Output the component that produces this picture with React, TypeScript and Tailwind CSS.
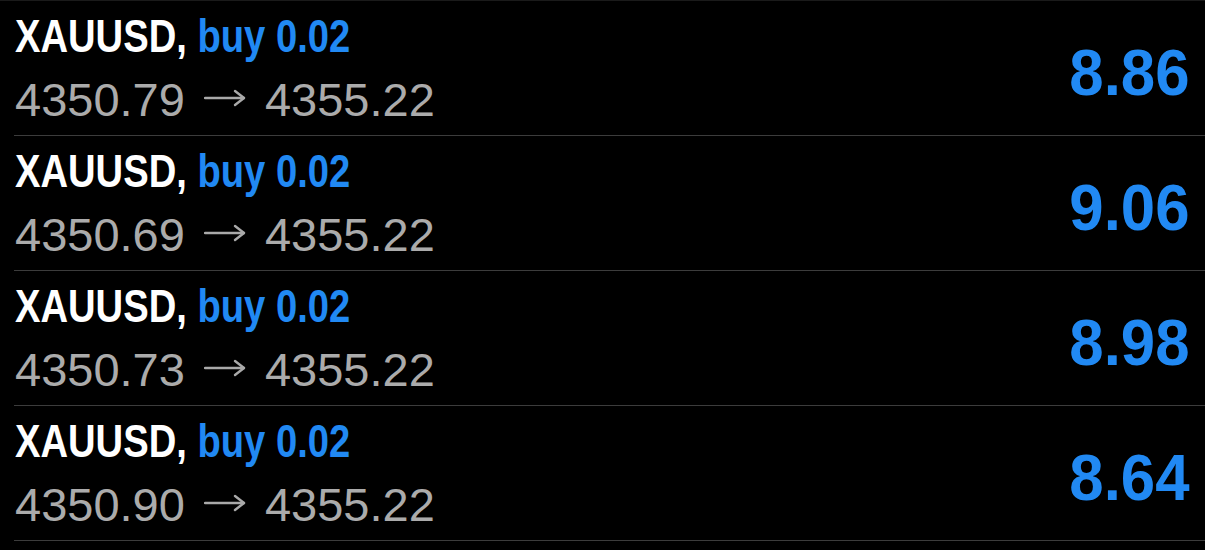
import React from 'react'

interface Position {
  symbol: string
  side: string
  open: string
  current: string
  profit: string
}

const positions: Position[] = [
  { symbol: 'XAUUSD', side: 'buy 0.02', open: '4350.79', current: '4355.22', profit: '8.86' },
  { symbol: 'XAUUSD', side: 'buy 0.02', open: '4350.69', current: '4355.22', profit: '9.06' },
  { symbol: 'XAUUSD', side: 'buy 0.02', open: '4350.73', current: '4355.22', profit: '8.98' },
  { symbol: 'XAUUSD', side: 'buy 0.02', open: '4350.90', current: '4355.22', profit: '8.64' },
]

const font = { fontFamily: '"Liberation Sans", Arial, sans-serif' }

function Arrow() {
  return (
    <svg width="42" height="20" viewBox="0 0 42 20" className="inline-block mx-[19px] mb-[4px]" fill="none" stroke="#a9a9a9" strokeWidth="2.4" strokeLinecap="round" strokeLinejoin="round">
      <path d="M1 10 H40" />
      <path d="M31 3 L40 10 L31 17" />
    </svg>
  )
}

export default function App() {
  return (
    <div className="w-[1205px] h-[550px] bg-black overflow-hidden border-t border-[#1a1a1a]" style={font}>
      {positions.map((p, i) => (
        <div key={i} className="ml-[14px] h-[135px] border-b border-[#3c3c3c] flex items-start justify-between pr-[15px]">
          <div className="flex flex-col pl-[1px] pt-[12px]">
            <div className="text-[46px] leading-[46px] font-bold whitespace-nowrap">
              <span className="inline-block origin-left scale-x-[0.83]">
                <span className="text-white">{p.symbol},</span>{' '}
                <span className="text-[#2189f3]">{p.side}</span>
              </span>
            </div>
            <div className="mt-[17px] text-[47px] leading-[47px] text-[#ababab] whitespace-nowrap flex items-center">
              <span>{p.open}</span>
              <Arrow />
              <span>{p.current}</span>
            </div>
          </div>
          <div className="pt-[39px] text-[65px] leading-[65px] font-bold text-[#2189f3]">
            <span className="inline-block origin-right scale-x-[0.95]">{p.profit}</span>
          </div>
        </div>
      ))}
    </div>
  )
}
